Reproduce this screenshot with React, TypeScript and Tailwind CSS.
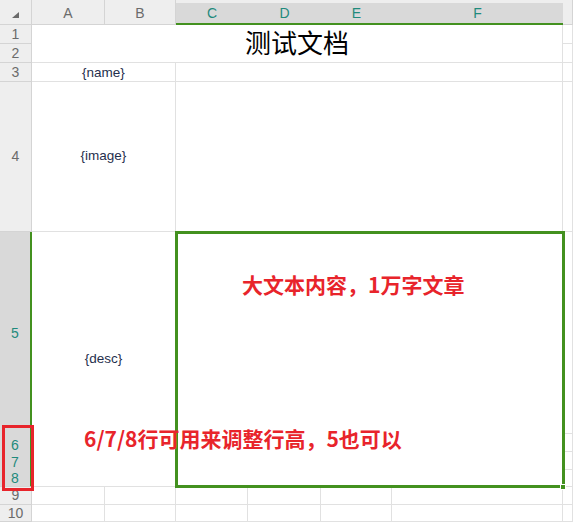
const hdr = "flex items-center justify-center border-r border-b border-[#d4d4d4] bg-[#eeeeee] text-[#6b6b6b]";
const hdrSel = "flex items-center justify-center bg-[#d9d9d9] text-[#1f8a7c]";
const cell = "border-r border-b border-[#e1e1e1] bg-white";

const App = () => {
    return (
        <div className="relative w-[573px] h-[522px] overflow-hidden bg-white font-['Liberation_Sans','Noto_Sans_CJK_SC',sans-serif] text-[14px]">
            <div className="grid grid-cols-[32px_73px_71px_72px_73px_71px_171px_10px] grid-rows-[25px_19px_19px_19px_150px_202px_18px_18px_17px_18px_17px]">
                {/* column headers */}
                <div className={hdr + " relative"}>
                    <svg className="absolute left-[12px] top-[12px]" width="7" height="6" viewBox="0 0 7 6">
                        <path d="M7 0 L7 6 L0 6 Z" fill="#6a6a6a" />
                    </svg>
                </div>
                <div className={hdr + " pt-[3px]"}>A</div>
                <div className={hdr + " pt-[3px]"}>B</div>
                <div className="col-span-4 grid grid-cols-[72px_73px_71px_171px] border-t-[3px] border-t-[#eeeeee] border-b-2 border-b-[#43911f] bg-[#d9d9d9] text-[#1f8a7c]">
                    <div className="flex items-center justify-center">C</div>
                    <div className="flex items-center justify-center">D</div>
                    <div className="flex items-center justify-center">E</div>
                    <div className="flex items-center justify-center">F</div>
                </div>
                <div className={hdr}></div>

                {/* rows 1-2 */}
                <div className={hdr}>1</div>
                <div className={cell + " col-span-6 row-span-2 flex items-center justify-center text-[26px] text-black pt-[2px]"}>测试文档</div>
                <div className={cell}></div>
                <div className={hdr}>2</div>
                <div className={cell}></div>

                {/* row 3 */}
                <div className={hdr}>3</div>
                <div className={cell + " col-span-2 flex items-center justify-center text-[13.5px] text-[#1f2f4d] pt-[2px]"}>{"{name}"}</div>
                <div className={cell + " col-span-4"}></div>
                <div className={cell}></div>

                {/* row 4 */}
                <div className={hdr}>4</div>
                <div className={cell + " col-span-2 flex items-center justify-center text-[13.5px] text-[#1f2f4d]"}>{"{image}"}</div>
                <div className={cell + " col-span-4"}></div>
                <div className={cell}></div>

                {/* rows 5-8 */}
                <div className={hdrSel + " border-r-2 border-r-[#43911f]"}>5</div>
                <div className={cell + " col-span-2 row-span-4 flex items-center justify-center text-[13.5px] text-[#1f2f4d]"}>{"{desc}"}</div>
                <div className="col-span-4 row-span-4 relative bg-white">
                    <div className="absolute -left-[1px] -top-[1px] -right-[2px] -bottom-[1px] border-[3px] border-[#43911f]"></div>
                    <div className="absolute -right-[3px] -bottom-[3px] w-[6px] h-[6px] bg-[#43911f] border border-white"></div>
                </div>
                <div className={cell}></div>
                <div className={hdrSel + " border-r-2 border-r-[#43911f] pt-[4px]"}>6</div>
                <div className={cell}></div>
                <div className={hdrSel + " border-r-2 border-r-[#43911f] pt-[2px]"}>7</div>
                <div className={cell}></div>
                <div className={hdrSel + " border-r-2 border-r-[#43911f] border-b border-b-[#d4d4d4]"}>8</div>
                <div className={cell}></div>

                {/* rows 9-10 */}
                <div className={hdr}>9</div>
                <div className={cell}></div>
                <div className={cell}></div>
                <div className={cell}></div>
                <div className={cell}></div>
                <div className={cell}></div>
                <div className={cell}></div>
                <div className={cell}></div>
                <div className={hdr}>10</div>
                <div className={cell}></div>
                <div className={cell}></div>
                <div className={cell}></div>
                <div className={cell}></div>
                <div className={cell}></div>
                <div className={cell}></div>
                <div className={cell}></div>
            </div>

            {/* annotations */}
            <div className="absolute left-[242px] top-[271px] font-['Noto_Sans_CJK_SC',sans-serif] font-bold text-[21px] leading-[27px] text-[#e8242b] whitespace-nowrap">大文本内容，1万字文章</div>
            <div className="absolute left-[84px] top-[425px] font-['Noto_Sans_CJK_SC',sans-serif] font-bold text-[21px] leading-[27px] text-[#e8242b] whitespace-nowrap">6/7/8行可用来调整行高，5也可以</div>
            <div className="absolute left-[2px] top-[425px] w-[32px] h-[66px] border-[3px] border-[#e8242b]"></div>
        </div>
    );
};

export default App;
